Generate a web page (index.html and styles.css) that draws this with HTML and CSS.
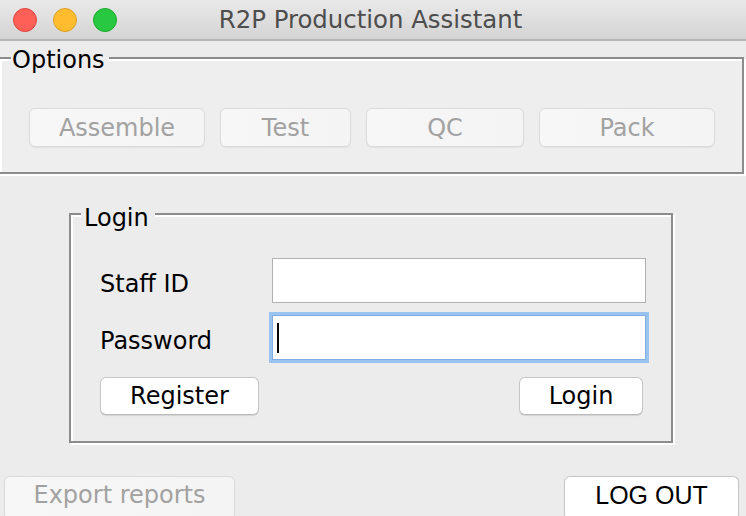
FILE: index.html
```html
<!DOCTYPE html>
<html lang="en">
<head>
<meta charset="utf-8">
<title>R2P Production Assistant</title>
<link rel="stylesheet" href="styles.css">
</head>
<body>
<div class="window">
  <header class="titlebar">
    <div class="lights">
      <span class="light red"></span>
      <span class="light yellow"></span>
      <span class="light green"></span>
    </div>
    <div class="title">R2P Production Assistant</div>
    <div class="spacer"></div>
  </header>

  <section class="group options">
    <span class="legend legend-options">Options</span>
    <div class="option-buttons">
      <button class="btn disabled">Assemble</button>
      <button class="btn disabled">Test</button>
      <button class="btn disabled">QC</button>
      <button class="btn disabled">Pack</button>
    </div>
  </section>

  <section class="group login">
    <span class="legend legend-login">Login</span>
    <div class="login-form">
      <div class="field-label">Staff ID</div>
      <div class="field"></div>
      <div class="field-label">Password</div>
      <div class="field focused"><span class="caret"></span></div>
      <button class="btn register">Register</button>
      <button class="btn login-btn">Login</button>
    </div>
  </section>

  <footer class="bottom-bar">
    <button class="btn disabled tall export">Export reports</button>
    <button class="btn tall logout">LOG OUT</button>
  </footer>
</div>
</body>
</html>
```

FILE: styles.css
```css
html, body {
  margin: 0;
  padding: 0;
}

body {
  width: 746px;
  height: 516px;
  overflow: hidden;
  background: #ececec;
  font-family: "DejaVu Sans", sans-serif;
  font-size: 24px;
  line-height: 28px;
  color: #000;
}

.window {
  width: 746px;
  height: 516px;
}

/* ---------- title bar ---------- */
.titlebar {
  height: 39px;
  border-bottom: 2px solid #b6b6b6;
  background: linear-gradient(#e9e9e9, #d4d4d4);
  display: grid;
  grid-template-columns: 1fr auto 1fr;
  align-items: center;
}

.lights {
  display: flex;
  gap: 16px;
  padding-left: 13px;
}

.light {
  width: 24px;
  height: 24px;
  border-radius: 50%;
  box-sizing: border-box;
  border: 1px solid;
}

.red { background: #fe5f57; border-color: #e0443e; }
.yellow { background: #febc2e; border-color: #dea123; }
.green { background: #28c840; border-color: #1aab29; }

.title {
  color: #4d4d4d;
  font-size: 24.4px;
  line-height: 28px;
  padding-top: 1px;
  margin-right: 5px;
}

/* ---------- group boxes ---------- */
.group {
  position: relative;
  box-sizing: border-box;
  border: 2px solid #8c8c8c;
  box-shadow: inset 2px 2px 0 #fff, 2px 2px 0 #fff;
}

.legend {
  position: absolute;
  line-height: 28px;
  color: #000;
}

.options {
  margin: 16px 0 0 -2px;
  width: 746px;
  height: 117px;
  background: #eeeeee;
  padding: 49px 0 0 29px;
}

.legend-options {
  left: 11px;
  top: -13px;
  padding: 0 4px 0 1px;
  background: linear-gradient(#ececec 11px, #eeeeee 11px);
}

.option-buttons {
  display: grid;
  grid-template-columns: 176px 131px 158px 176px;
  column-gap: 15px;
  height: 39px;
}

.option-buttons .btn {
  height: 39px;
}

.login {
  margin: 39px 0 0 69px;
  width: 604px;
  height: 230px;
  padding: 43px 25px 26px 29px;
}

.legend-login {
  left: 10px;
  top: -11px;
  padding: 0 6px 0 3px;
  background: #ececec;
}

.login-form {
  display: grid;
  grid-template-columns: 172px 374px;
  grid-template-rows: 45px 45px 43px;
  row-gap: 12px;
}

.field-label {
  align-self: center;
  padding-top: 7px;
  line-height: 28px;
}

.field {
  box-sizing: border-box;
  height: 45px;
  border: 1px solid #b1b1b1;
  background: #fff;
  display: flex;
  align-items: center;
}

.field.focused {
  border-color: #82ade2;
  box-shadow: 0 0 0 3px #9ac3f0;
}

.caret {
  display: block;
  width: 2px;
  height: 30px;
  margin-left: 4px;
  background: #000;
}

/* ---------- buttons ---------- */
.btn {
  box-sizing: border-box;
  height: 38px;
  padding: 0;
  margin: 0;
  font-family: inherit;
  font-size: 24px;
  line-height: 28px;
  color: #000;
  background: #fff;
  border: 1px solid #c6c6c6;
  border-bottom-color: #b9b9b9;
  border-radius: 6px;
  box-shadow: 0 1px 1px rgba(0, 0, 0, 0.1);
}

.btn.disabled {
  color: #a2a2a2;
  background: linear-gradient(90deg, #f7f7f7, #f4f4f4);
  border-color: #dadada;
  box-shadow: 0 1px 1px rgba(0, 0, 0, 0.05);
}

.register {
  width: 159px;
  align-self: end;
}

.login-btn {
  width: 124px;
  align-self: end;
  justify-self: end;
  margin-right: 3px;
}

.bottom-bar {
  margin-top: 33px;
  display: flex;
  justify-content: space-between;
  padding: 0 7px 0 4px;
}

.btn.tall {
  height: 44px;
  padding-bottom: 6px;
}

.export {
  width: 231px;
}

.logout {
  width: 175px;
  font-family: "Liberation Sans", sans-serif;
  font-size: 25px;
}
```
